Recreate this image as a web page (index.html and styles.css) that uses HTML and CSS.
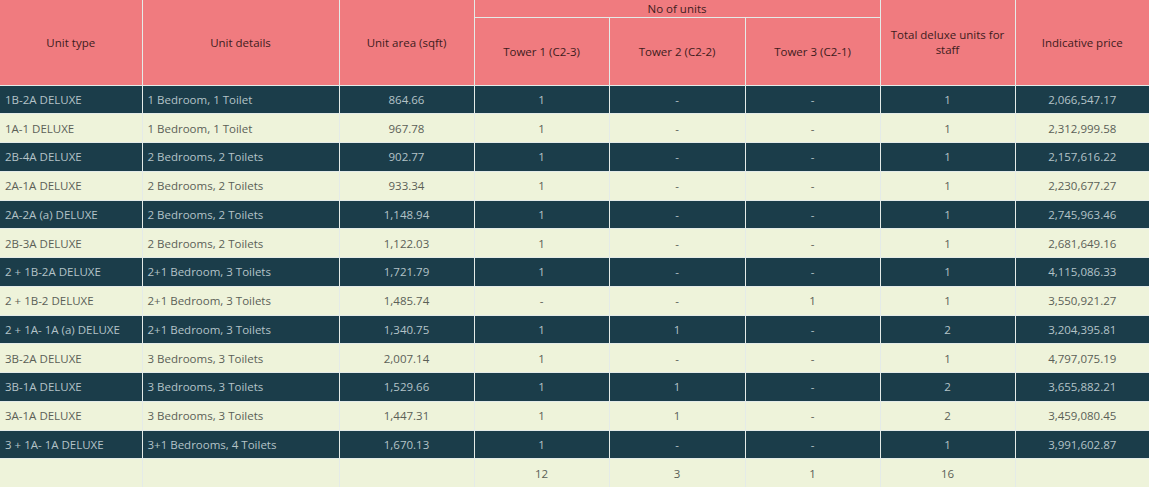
FILE: index.html
```html
<!DOCTYPE html>
<html>
<head>
<meta charset="utf-8">
<link rel="stylesheet" href="styles.css">
</head>
<body>
<table class="units">
  <colgroup>
    <col class="c1"><col class="c2"><col class="c3"><col class="c4"><col class="c5"><col class="c6"><col class="c7"><col class="c8">
  </colgroup>
  <thead>
    <tr class="h1">
      <th rowspan="2">Unit type</th>
      <th rowspan="2">Unit details</th>
      <th rowspan="2">Unit area (sqft)</th>
      <th colspan="3">No of units</th>
      <th rowspan="2">Total deluxe units for<br>staff</th>
      <th rowspan="2">Indicative price</th>
    </tr>
    <tr class="h2">
      <th>Tower 1 (C2-3)</th>
      <th>Tower 2 (C2-2)</th>
      <th>Tower 3 (C2-1)</th>
    </tr>
  </thead>
  <tbody>
    <tr class="dark"><td class="l">1B-2A DELUXE</td><td class="l">1 Bedroom, 1 Toilet</td><td>864.66</td><td>1</td><td>-</td><td>-</td><td>1</td><td>2,066,547.17</td></tr>
    <tr class="light"><td class="l">1A-1 DELUXE</td><td class="l">1 Bedroom, 1 Toilet</td><td>967.78</td><td>1</td><td>-</td><td>-</td><td>1</td><td>2,312,999.58</td></tr>
    <tr class="dark"><td class="l">2B-4A DELUXE</td><td class="l">2 Bedrooms, 2 Toilets</td><td>902.77</td><td>1</td><td>-</td><td>-</td><td>1</td><td>2,157,616.22</td></tr>
    <tr class="light"><td class="l">2A-1A DELUXE</td><td class="l">2 Bedrooms, 2 Toilets</td><td>933.34</td><td>1</td><td>-</td><td>-</td><td>1</td><td>2,230,677.27</td></tr>
    <tr class="dark"><td class="l">2A-2A (a) DELUXE</td><td class="l">2 Bedrooms, 2 Toilets</td><td>1,148.94</td><td>1</td><td>-</td><td>-</td><td>1</td><td>2,745,963.46</td></tr>
    <tr class="light"><td class="l">2B-3A DELUXE</td><td class="l">2 Bedrooms, 2 Toilets</td><td>1,122.03</td><td>1</td><td>-</td><td>-</td><td>1</td><td>2,681,649.16</td></tr>
    <tr class="dark"><td class="l">2 + 1B-2A DELUXE</td><td class="l">2+1 Bedroom, 3 Toilets</td><td>1,721.79</td><td>1</td><td>-</td><td>-</td><td>1</td><td>4,115,086.33</td></tr>
    <tr class="light"><td class="l">2 + 1B-2 DELUXE</td><td class="l">2+1 Bedroom, 3 Toilets</td><td>1,485.74</td><td>-</td><td>-</td><td>1</td><td>1</td><td>3,550,921.27</td></tr>
    <tr class="dark"><td class="l">2 + 1A- 1A (a) DELUXE</td><td class="l">2+1 Bedroom, 3 Toilets</td><td>1,340.75</td><td>1</td><td>1</td><td>-</td><td>2</td><td>3,204,395.81</td></tr>
    <tr class="light"><td class="l">3B-2A DELUXE</td><td class="l">3 Bedrooms, 3 Toilets</td><td>2,007.14</td><td>1</td><td>-</td><td>-</td><td>1</td><td>4,797,075.19</td></tr>
    <tr class="dark"><td class="l">3B-1A DELUXE</td><td class="l">3 Bedrooms, 3 Toilets</td><td>1,529.66</td><td>1</td><td>1</td><td>-</td><td>2</td><td>3,655,882.21</td></tr>
    <tr class="light"><td class="l">3A-1A DELUXE</td><td class="l">3 Bedrooms, 3 Toilets</td><td>1,447.31</td><td>1</td><td>1</td><td>-</td><td>2</td><td>3,459,080.45</td></tr>
    <tr class="dark"><td class="l">3 + 1A- 1A DELUXE</td><td class="l">3+1 Bedrooms, 4 Toilets</td><td>1,670.13</td><td>1</td><td>-</td><td>-</td><td>1</td><td>3,991,602.87</td></tr>
    <tr class="light"><td class="l"></td><td class="l"></td><td></td><td>12</td><td>3</td><td>1</td><td>16</td><td></td></tr>
  </tbody>
</table>
</body>
</html>
```

FILE: styles.css
```css
html, body {
  margin: 0;
  padding: 0;
  background: #eef3da;
}

.units {
  width: 1149px;
  table-layout: fixed;
  border-collapse: collapse;
  border-style: hidden;
  font-family: "Open Sans", "DejaVu Sans", sans-serif;
  font-size: 11.5px;
}

.c1 { width: 142px; }
.c2 { width: 197px; }
.c3 { width: 135px; }
.c4 { width: 135px; }
.c5 { width: 136px; }
.c6 { width: 135px; }
.c7 { width: 135px; }
.c8 { width: 134px; }

.units th,
.units td {
  border: 1px solid #e4ebe8;
  padding: 0 5px;
  text-align: center;
  vertical-align: middle;
  line-height: 15px;
}

.units th {
  background: #f07b7f;
  color: #3e1c1d;
  font-weight: normal;
}

.h1 { height: 17px; }
.h2 { height: 68px; }

.units tbody tr { height: 28.75px; }

.units td.l { text-align: left; }

.dark td {
  background: #1b3d4a;
  color: #b4c3c8;
}

.light td {
  background: #eef3da;
  color: #5b5f57;
}
```
